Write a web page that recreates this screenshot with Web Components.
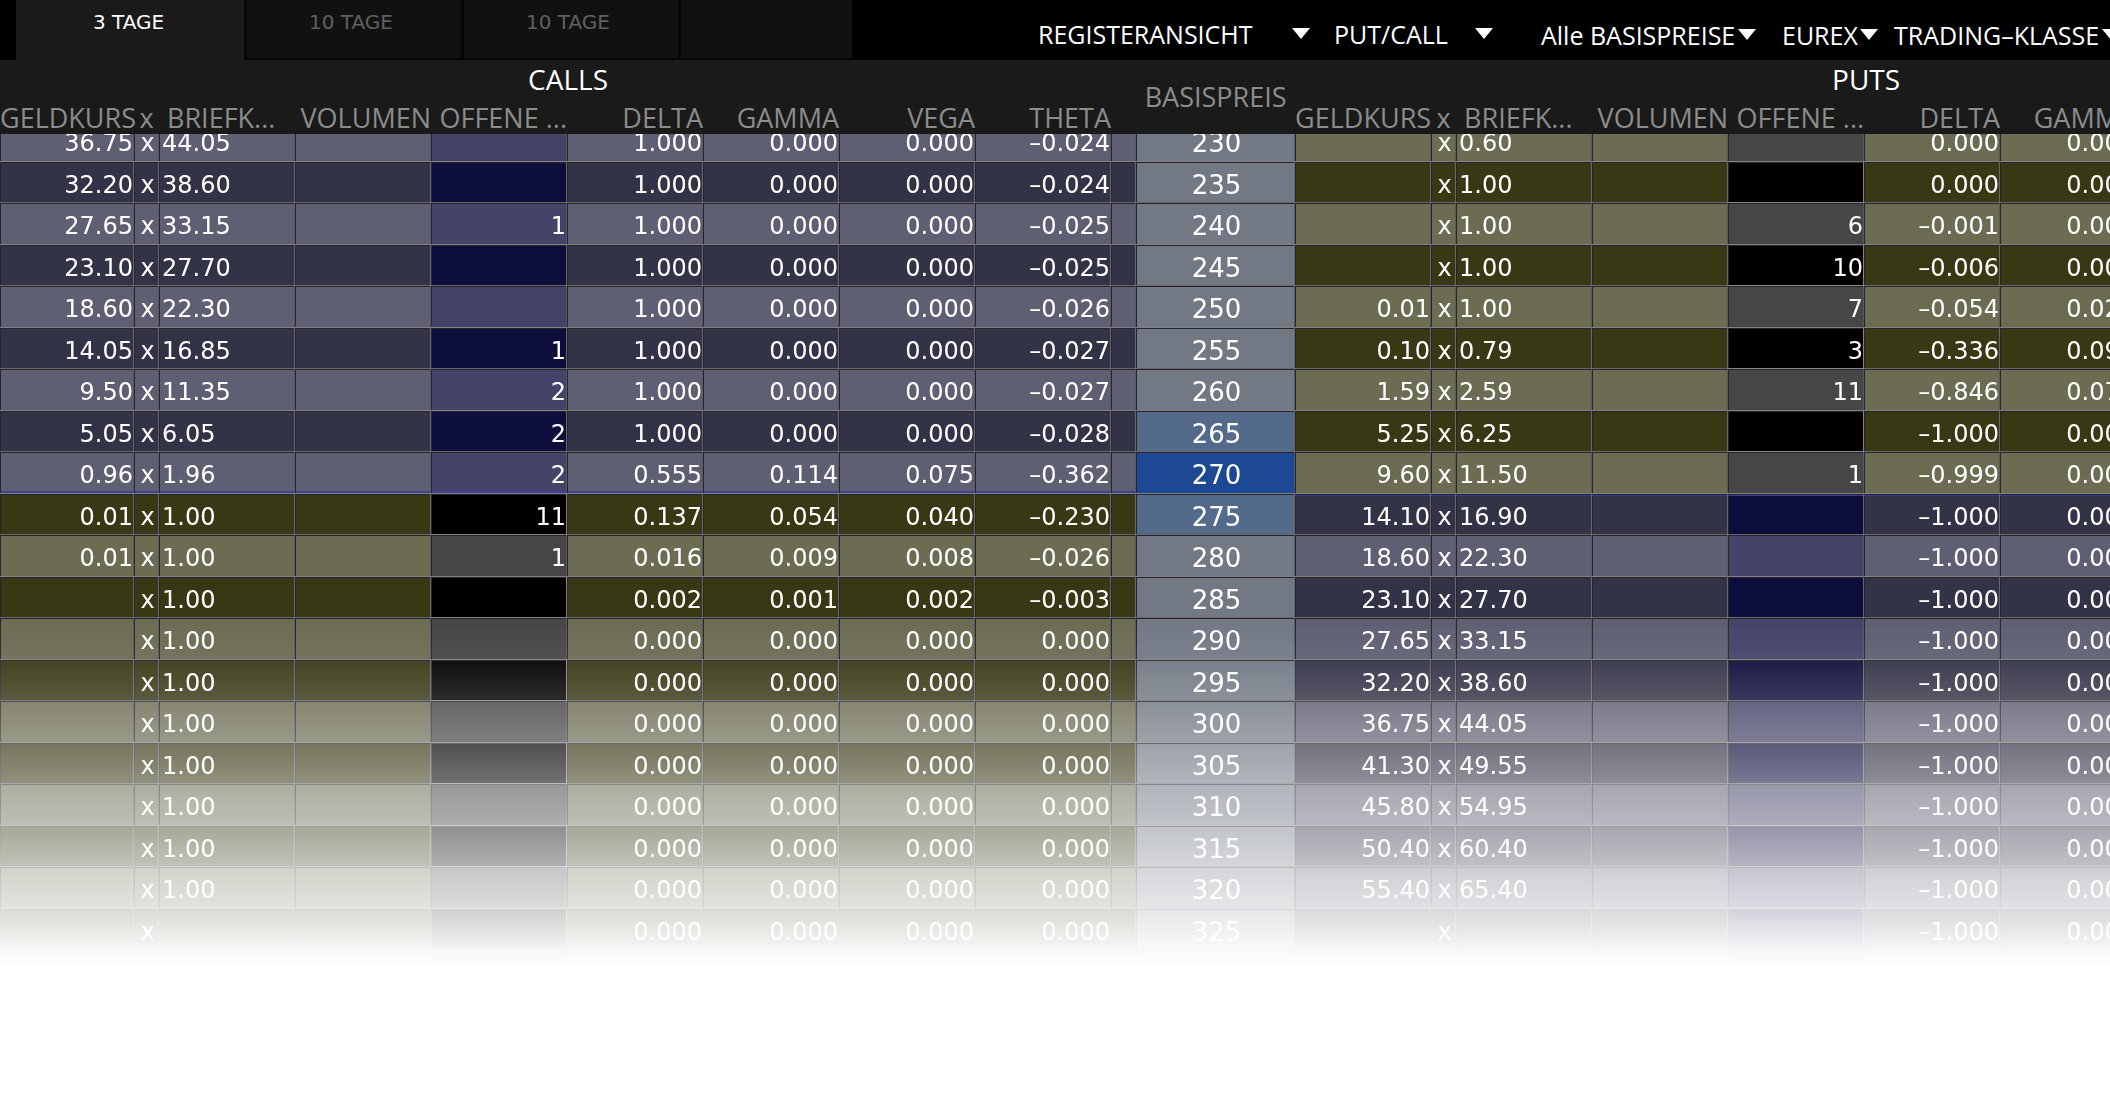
<!DOCTYPE html>
<html lang="de">
<head>
<meta charset="utf-8">
<title>Optionskette</title>
<style>
  body { margin: 0; background: #fff; }
</style>
</head>
<body>
<option-chain></option-chain>

<script>
/* Column layout shared by the heading table and the quote table. */
const SIDE = [136, 25, 136, 136, 136, 136, 136, 136, 136, 25];
const COLS = [134, ...SIDE.slice(1), 159, ...SIDE];
const colgroup = '<colgroup>' + COLS.map(w => `<col style="width:${w}px">`).join('') + '</colgroup>';
const TABLE_CSS = `
  table { width: ${COLS.reduce((a, b) => a + b)}px; table-layout: fixed; border-collapse: separate; border-spacing: 0; }
  th, td { padding: 0; white-space: nowrap; font-weight: 400; vertical-align: top; }`;

/* One tab of the expiry strip. */
customElements.define('expiry-tab', class extends HTMLElement {
  constructor() {
    super();
    this.attachShadow({ mode: 'open' }).innerHTML = `
      <style>
        :host { display: block; box-sizing: border-box; height: 60px; background: #111; border-left: 3px solid #070707; border-bottom: 2px solid #050505; }
        :host([active]) { background: #1a1a1a; border-color: #1a1a1a; }
        button { display: block; width: 100%; height: 44px; margin: 0; padding: 0 6px 0 0; border: 0; background: none;
          font: 20px/44px "DejaVu Sans", sans-serif; color: #606060; }
        :host([active]) button { color: #fff; }
      </style>
      <button type="button" role="tab"><slot></slot></button>`;
    this.shadowRoot.querySelector('button').setAttribute('aria-selected', this.hasAttribute('active'));
  }
});

/* Drop-down: native select with a solid triangle after it. */
customElements.define('menu-select', class extends HTMLElement {
  constructor() {
    super();
    const name = this.getAttribute('label');
    this.attachShadow({ mode: 'open' }).innerHTML = `
      <style>
        :host { display: flex; flex: none; }
        label { display: flex; align-items: center; gap: var(--arrow-gap, 2px); }
        select { appearance: none; margin: 0; padding: 0; border: 0; background: none; color: #fff;
          font: 25px/34px "Open Sans", sans-serif; }
        svg { flex: none; display: block; margin-bottom: 1px; }
      </style>
      <label><select aria-label="${name}"><option>${name}</option></select>
      <svg width="18" height="11" viewBox="0 0 18 11" aria-hidden="true"><path d="M0 0H18L9 11Z" fill="#fff"/></svg></label>`;
  }
});

customElements.define('chain-toolbar', class extends HTMLElement {
  constructor() {
    super();
    this.attachShadow({ mode: 'open' }).innerHTML = `
      <style>
        :host { display: flex; height: 60px; background: #000; overflow: hidden; }
        .tabs { display: flex; flex: none; padding-left: 16px; }
        .tabs expiry-tab { width: 217px; }
        .tabs expiry-tab:first-child { width: 228px; }
        .tabs expiry-tab:last-child { width: 174px; }
        .menus { display: flex; flex: none; align-items: center; box-sizing: border-box; }
        .view { padding: 8px 0 0 186px; gap: 24px; --arrow-gap: 39px; }
        .view menu-select + menu-select { --arrow-gap: 27px; }
        .filter { padding: 10px 0 0 48px; gap: 26px; }
        .filter menu-select:last-child { margin-left: -10px; }
      </style>
      <div class="tabs" role="tablist">
        <expiry-tab active>3 TAGE</expiry-tab>
        <expiry-tab>10 TAGE</expiry-tab>
        <expiry-tab>10 TAGE</expiry-tab>
        <expiry-tab></expiry-tab>
      </div>
      <div class="menus view">
        <menu-select label="REGISTERANSICHT"></menu-select>
        <menu-select label="PUT/CALL"></menu-select>
      </div>
      <div class="menus filter">
        <menu-select label="Alle BASISPREISE"></menu-select>
        <menu-select label="EUREX"></menu-select>
        <menu-select label="TRADING–KLASSE"></menu-select>
      </div>`;
  }
});

customElements.define('chain-head', class extends HTMLElement {
  constructor() {
    super();
    const calls = ['GELDKURS', 'x', 'BRIEFK...', 'VOLUMEN', 'OFFENE ...', 'DELTA', 'GAMMA', 'VEGA', 'THETA', ''];
    const puts = ['GELDKURS', 'x', 'BRIEFK...', 'VOLUMEN', 'OFFENE ...', 'DELTA', 'GAMMA', '', '', ''];
    const cell = t => `<th scope="col" class="${t === 'x' ? 'x' : t === 'BRIEFK...' ? 'ask' : ''}">${t}</th>`;
    this.attachShadow({ mode: 'open' }).innerHTML = `
      <style>
        :host { display: block; overflow: hidden; background: #1a1a1a; color: #8c8c8c; font: 27px "Open Sans", sans-serif; }
        ${TABLE_CSS}
        .side { height: 38px; font-size: 28px; line-height: 38px; color: #fff; text-align: center; }
        .puts { padding-left: 4px; }
        .strike { line-height: 74px; text-align: center; }
        .cols th { height: 32px; padding-top: 4px; line-height: 32px; text-align: right; }
        .cols .x { text-align: center; }
        .cols .ask { text-align: left; padding-left: 8px; }
      </style>
      <table>${colgroup}
        <thead>
          <tr><th class="side" colspan="10">CALLS</th><th class="strike" rowspan="2">BASISPREIS</th><th class="side puts" colspan="10">PUTS</th></tr>
          <tr class="cols">${calls.map(cell).join('')}${puts.map(cell).join('')}</tr>
        </thead>
      </table>`;
  }
});

/* strike | call bid, ask, open interest, delta, gamma, vega, theta | put bid, ask, open interest, delta, gamma */
const QUOTES = `
230|36.75,44.05,,1.000,0.000,0.000,–0.024|,0.60,,0.000,0.000
235|32.20,38.60,,1.000,0.000,0.000,–0.024|,1.00,,0.000,0.000
240|27.65,33.15,1,1.000,0.000,0.000,–0.025|,1.00,6,–0.001,0.000
245|23.10,27.70,,1.000,0.000,0.000,–0.025|,1.00,10,–0.006,0.003
250|18.60,22.30,,1.000,0.000,0.000,–0.026|0.01,1.00,7,–0.054,0.020
255|14.05,16.85,1,1.000,0.000,0.000,–0.027|0.10,0.79,3,–0.336,0.090
260|9.50,11.35,2,1.000,0.000,0.000,–0.027|1.59,2.59,11,–0.846,0.070
265|5.05,6.05,2,1.000,0.000,0.000,–0.028|5.25,6.25,,–1.000,0.000
270|0.96,1.96,2,0.555,0.114,0.075,–0.362|9.60,11.50,1,–0.999,0.000
275|0.01,1.00,11,0.137,0.054,0.040,–0.230|14.10,16.90,,–1.000,0.000
280|0.01,1.00,1,0.016,0.009,0.008,–0.026|18.60,22.30,,–1.000,0.000
285|,1.00,,0.002,0.001,0.002,–0.003|23.10,27.70,,–1.000,0.000
290|,1.00,,0.000,0.000,0.000,0.000|27.65,33.15,,–1.000,0.000
295|,1.00,,0.000,0.000,0.000,0.000|32.20,38.60,,–1.000,0.000
300|,1.00,,0.000,0.000,0.000,0.000|36.75,44.05,,–1.000,0.000
305|,1.00,,0.000,0.000,0.000,0.000|41.30,49.55,,–1.000,0.000
310|,1.00,,0.000,0.000,0.000,0.000|45.80,54.95,,–1.000,0.000
315|,1.00,,0.000,0.000,0.000,0.000|50.40,60.40,,–1.000,0.000
320|,1.00,,0.000,0.000,0.000,0.000|55.40,65.40,,–1.000,0.000
325|,,,0.000,0.000,0.000,0.000|,,,–1.000,0.000
|,,,,,,|,,,,`.trim().split('\n');

customElements.define('chain-quotes', class extends HTMLElement {
  constructor() {
    super();
    const side = (kind, bid, ask, open, greeks, last) => {
      const x = last ? '' : 'x';
      return [['', bid], ['x', x], ['ask', ask], ['', ''], ['oi', open], ...greeks.map(g => ['', g]), ['', '']]
        .map(([c, t]) => `<td class="${kind} ${c}">${t}</td>`).join('');
    };
    const rows = QUOTES.map((line, i) => {
      const [strike, c, p] = line.split('|');
      const call = c.split(','), put = p.split(',');
      const last = strike === '';
      const low = i < 9;
      const near = strike === '270' ? 'atm' : strike === '265' || strike === '275' ? 'near' : '';
      return `<tr class="${strike === '270' ? 'edge-call' : strike === '275' ? 'edge-put' : ''}">` +
        side(low ? 'itm' : 'otm', call[0], call[1], call[2], call.slice(3), last) +
        `<th scope="row" class="strike ${near}">${strike}</th>` +
        side(low ? 'otm' : 'itm', put[0], put[1], put[2], [put[3], put[4], '', ''], last) + '</tr>';
    }).join('');
    this.attachShadow({ mode: 'open' }).innerHTML = `
      <style>
        :host { display: block; overflow: hidden; color: #fff; font: 24px "DejaVu Sans", sans-serif;
          mask-image: linear-gradient(to bottom, #000 486px, rgba(0,0,0,.94) 526px, rgba(0,0,0,.83) 565px,
            rgba(0,0,0,.69) 609px, rgba(0,0,0,.56) 648px, rgba(0,0,0,.44) 692px, rgba(0,0,0,.31) 732px,
            rgba(0,0,0,.19) 774px, rgba(0,0,0,.05) 814px, transparent 832px); }
        ${TABLE_CSS}
        /* The list is scrolled a little, so its first row sits partly under the headings. */
        table { margin-top: -14px; }
        tr { height: 42px; }
        tr:nth-child(even) { height: 41px; }
        td, th { box-sizing: border-box; padding: 6px 0 0 3px; line-height: 34px; text-align: right;
          border-right: 1px solid #58585e; border-bottom: 1px solid #808086; box-shadow: inset 1px 1px #26262a; }
        tr:nth-child(even) > * { border-right-color: #66666c; border-bottom-color: #66666c; }
        .x, .strike { text-align: center; }
        .ask { text-align: left; }
        .itm { background: #5f5f73; }
        .itm.oi { background: #444468; }
        .otm { background: #6c6c53; }
        .otm.oi { background: #464646; }
        tr:nth-child(even) .itm { background: #333347; }
        tr:nth-child(even) .itm.oi { background: #0e0e3c; }
        tr:nth-child(even) .otm { background: #383815; }
        tr:nth-child(even) .otm.oi { background: #000; border-color: #85858b; }
        .strike { font-size: 26px; background: #727985; }
        .near { background: #546a8a; }
        .atm { background: #1c4894; }
        .edge-call .itm { box-shadow: inset 1px 1px #26262a, inset 0 -2px #40409a; }
        .edge-put .itm { box-shadow: inset 0 1px #26262a, inset 0 2px #3a3a90, inset 1px 0 #26262a; }
      </style>
      <table>${colgroup}<tbody>${rows}</tbody></table>`;
  }
});

customElements.define('option-chain', class extends HTMLElement {
  constructor() {
    super();
    this.attachShadow({ mode: 'open' }).innerHTML = `
      <style>:host { display: flex; flex-direction: column; }</style>
      <chain-toolbar></chain-toolbar>
      <chain-head></chain-head>
      <chain-quotes></chain-quotes>`;
  }
});
</script>
</body>
</html>
